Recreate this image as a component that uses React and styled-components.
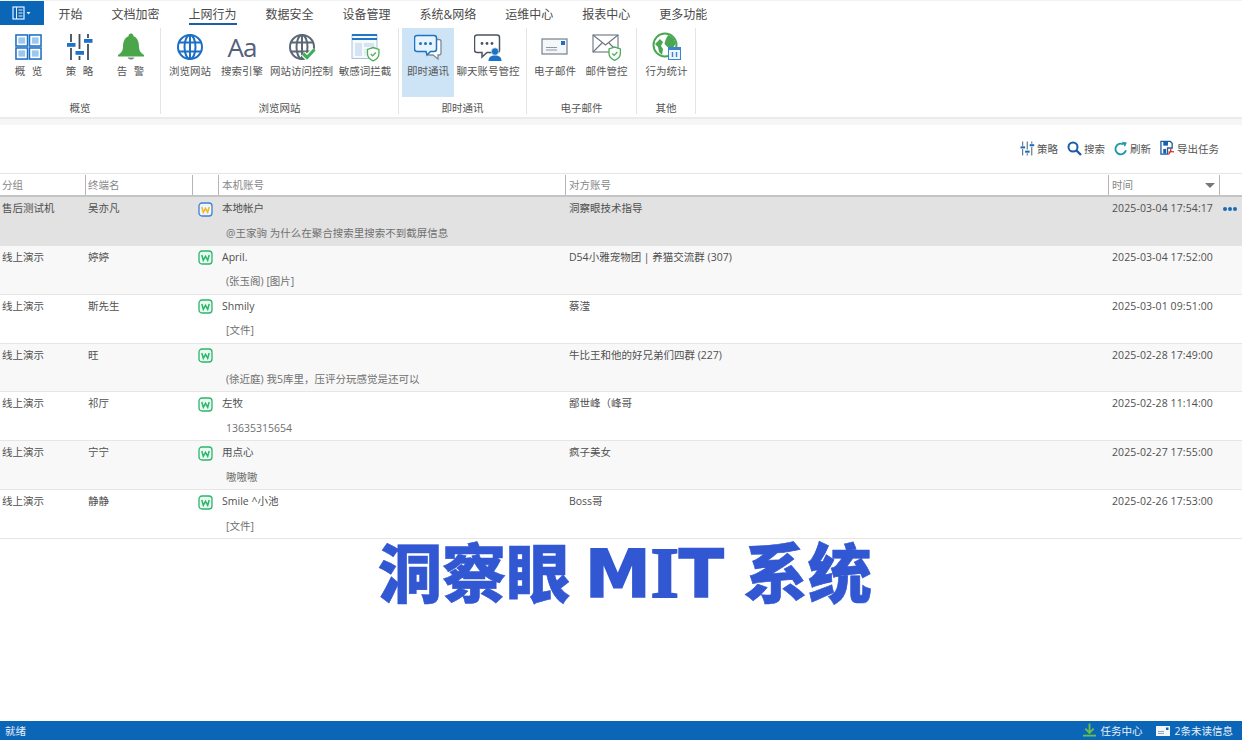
import React from "react";
import styled, { createGlobalStyle } from "styled-components";

const Global = createGlobalStyle`
  html, body { margin: 0; padding: 0; background: #fff; }
  body { font-family: "Open Sans", "Noto Sans CJK SC", sans-serif; color: #444; overflow: hidden; }
`;

const Page = styled.div`
  position: relative;
  width: 1242px;
  height: 740px;
  display: flex;
  flex-direction: column;
  background: #fff;
`;

/* ---------- tabs ---------- */
const TabBar = styled.div`
  height: 26px;
  display: flex;
  align-items: flex-start;
  box-sizing: border-box;
  border-top: 1px solid #f2f2f2;
`;
const MenuButton = styled.div`
  width: 44px;
  height: 24px;
  background: #0b66b8;
  display: flex;
  align-items: center;
  justify-content: center;
  flex: none;
`;
const Tabs = styled.div`
  display: flex;
  padding-left: 14.5px;
  gap: 29px;
`;
const Tab = styled.div`
  font-size: 12px;
  line-height: 27px;
  height: 24px;
  color: #4a4a4a;
  white-space: nowrap;
  box-sizing: border-box;
  border-bottom: ${(p) => (p.$active ? "2px solid #1b5fa8" : "2px solid transparent")};
`;

/* ---------- ribbon ---------- */
const Ribbon = styled.div`
  height: 91px;
  display: flex;
  padding-top: 2px;
  box-sizing: border-box;
`;
const Group = styled.div`
  width: ${(p) => p.$w}px;
  flex: none;
  display: flex;
  flex-direction: column;
  box-sizing: border-box;
  border-right: 1px solid #e4e4e4;
  height: 86px;
`;
const GroupButtons = styled.div`
  display: flex;
  padding-left: ${(p) => p.$pl || 0}px;
  height: 69px;
`;
const GroupLabel = styled.div`
  font-size: 10.5px;
  line-height: 14px;
  margin-top: 4px;
  text-align: center;
  color: #555;
`;
const RibbonButton = styled.div`
  width: ${(p) => p.$w}px;
  flex: none;
  height: 69px;
  display: flex;
  flex-direction: column;
  align-items: center;
  padding-top: 4px;
  box-sizing: border-box;
  background: ${(p) => (p.$active ? "#cde4f7" : "transparent")};
`;
const IconSlot = styled.div`
  height: 30px;
  display: flex;
  align-items: center;
  justify-content: center;
`;
const ButtonLabel = styled.div`
  margin-top: 1px;
  font-size: 10.5px;
  line-height: 16px;
  color: #555;
  white-space: nowrap;
  word-spacing: ${(p) => (p.$spaced ? "4px" : "0")};
`;
const AaGlyph = styled.span`
  font-family: "Open Sans", sans-serif;
  font-size: 26px;
  line-height: 30px;
  color: #55607a;
  letter-spacing: -1px;
`;
const Band = styled.div`
  height: 8px;
  background: #f6f6f6;
  border-top: 2px solid #ebebeb;
  box-sizing: border-box;
`;

/* ---------- toolbar ---------- */
const Toolbar = styled.div`
  height: 48px;
  display: flex;
  justify-content: flex-end;
  align-items: center;
  padding: 0 23px 2px 0;
  gap: 9px;
  box-sizing: border-box;
`;
const ToolItem = styled.div`
  display: flex;
  align-items: center;
  gap: 2px;
  font-size: 10.5px;
  color: #555;
`;

/* ---------- table ---------- */
const Table = styled.div`
  flex: 1;
  display: flex;
  flex-direction: column;
`;
const cols = "86px 107px 26px 347px 543px 111px 22px";
const HeaderRow = styled.div`
  display: grid;
  grid-template-columns: ${cols};
  height: 24px;
  border-top: 1px solid #e6e6e6;
  border-bottom: 2px solid #c4c4c4;
  box-sizing: border-box;
`;
const HeaderCell = styled.div`
  font-size: 10.5px;
  color: #888;
  padding-left: ${(p) => p.$pl ?? 3}px;
  padding-right: 4px;
  border-right: ${(p) => (p.$noline ? "none" : "1px solid #b5b5b5")};
  margin: 1px 0;
  line-height: 20px;
  display: flex;
  justify-content: space-between;
  align-items: center;
`;
const SortCaret = styled.span`
  width: 0;
  height: 0;
  border-left: 5px solid transparent;
  border-right: 5px solid transparent;
  border-top: 5px solid #777;
`;
const Row = styled.div`
  display: grid;
  grid-template-columns: ${cols};
  grid-template-rows: 24px 1fr;
  height: 48.86px;
  box-sizing: border-box;
  background: ${(p) => (p.$selected ? "#e2e2e2" : p.$alt ? "#f8f8f8" : "#fff")};
  border-bottom: 1px solid ${(p) => (p.$selected ? "#e2e2e2" : "#e6e6e6")};
`;
const Cell = styled.div`
  font-size: 10.5px;
  line-height: 23px;
  color: #505050;
  padding-left: ${(p) => p.$pl ?? 3}px;
  letter-spacing: ${(p) => p.$ls || 0}px;
  white-space: nowrap;
  overflow: hidden;
`;
const IconCell = styled.div`
  display: flex;
  justify-content: center;
  align-items: center;
  padding-right: 1px;
  height: 22px;
  padding-top: 1px;
`;
const Message = styled.div`
  grid-column: 4 / span 2;
  font-size: 10.5px;
  line-height: 23px;
  padding: 0.5px 0 0 7px;
  color: #707070;
  white-space: nowrap;
  grid-row: 2;
`;
const Dots = styled.div`
  display: flex;
  gap: 1px;
  align-items: center;
  padding-left: 3px;
  height: 23px;
`;
const Dot = styled.span`
  width: 4px;
  height: 4px;
  border-radius: 50%;
  background: #1b6ab8;
`;

/* ---------- overlay + status ---------- */
const Watermark = styled.div`
  position: absolute;
  left: 378px;
  top: 526px;
  display: flex;
  align-items: baseline;
  font-family: "Noto Sans CJK SC", sans-serif;
  font-weight: 900;
  font-size: 64px;
  line-height: 86px;
  color: #3257d2;
  white-space: pre;
  -webkit-text-stroke: 0.6px #3257d2;
`;
const WatermarkLatin = styled.span`
  display: flex;
  align-items: baseline;
  margin: 0 20px 0 15px;
  font-family: "DejaVu Sans", sans-serif;
  font-weight: 700;
  font-size: 66px;
  -webkit-text-stroke: 1.5px #3257d2;
`;
const WatermarkI = styled.span`
  font-family: "Liberation Serif", serif;
  font-size: 72px;
  -webkit-text-stroke: 2px #3257d2;
`;
const StatusBar = styled.div`
  height: 19px;
  background: #0b66b8;
  display: flex;
  align-items: center;
  justify-content: space-between;
  padding: 0 9px 0 5px;
  color: #e8f1fa;
  font-size: 10.5px;
  flex: none;
`;
const StatusRight = styled.div`
  display: flex;
  align-items: center;
  gap: 14px;
`;
const StatusItem = styled.div`
  display: flex;
  align-items: center;
  gap: 4px;
`;

/* ---------- drawings ---------- */
const GridIcon = () => (
  <svg width="27" height="26" viewBox="0 0 28 27" preserveAspectRatio="none">
    {[[1, 1], [15, 1], [1, 14.500], [15, 14.500]].map(([x, y]) => (
      <g key={x + "-" + y}>
        <rect x={x} y={y} width="12" height="11.500" fill="#fff" stroke="#1b6fc2" strokeWidth="1.600" />
        <rect x={x + 2.500} y={y + 2.500} width="7" height="6.500" fill="#9cc7ef" />
      </g>
    ))}
  </svg>
);
const Sliders = ({ s = 28, line = "#414c5c", h = "#1b74c8" }) => (
  <svg width={s} height={s} viewBox="0 0 28 28">
    <path d="M5 1v8M5 15v12M13.500 1v15M13.500 23v4M22 1v4M22 11v16" stroke={line} strokeWidth="1.800" fill="none" />
    <rect x="1" y="10" width="8.500" height="3.800" fill={h} />
    <rect x="9.500" y="18" width="8.500" height="3.800" fill={h} />
    <rect x="18" y="6" width="8.500" height="3.800" fill={h} />
  </svg>
);
const Bell = () => (
  <svg width="28" height="28" viewBox="0 0 28 28">
    <path d="M14 .5c1.500 0 2.500 1 2.500 2.800C21 5 22 10 22 14c0 4 2 6 5 8v1.500H1V22c3-2 5-4 5-8 0-4 1-9 5.500-10.700C11.500 1.500 12.500.5 14 .5z" fill="#4ba64a" />
    <path d="M10.500 24.500h7c-.8 1.500-2 2-3.500 2s-2.700-.5-3.500-2z" fill="#7d8a86" />
  </svg>
);
const Globe = ({ color = "#1c6fc4", check }) => (
  <svg width="28" height="28" viewBox="0 0 28 28">
    <g fill="none" stroke={color} strokeWidth="2">
      <circle cx="14" cy="14" r="12" />
      <ellipse cx="14" cy="14" rx="5.500" ry="12" />
      <path d="M14 2v24M3 9.500h22M3 18.500h22" />
    </g>
    {check && (
      <g fill="none">
        <path d="M15 20.500l4 4 7.500-8" stroke="#fff" strokeWidth="5.500" />
        <path d="M15 20.500l4 4 7.500-8" stroke="#3fae57" strokeWidth="3.200" />
      </g>
    )}
  </svg>
);
const Shield = ({ x, y, s = 1, c = "#4fae5b" }) => (
  <g transform={`translate(${x} ${y}) scale(${s})`}>
    <path d="M6 0l6 2v4.500c0 3.500-2.500 6-6 7.500-3.500-1.500-6-4-6-7.500V2z" fill="#fff" stroke={c} strokeWidth="1.400" />
    <path d="M3.400 6.800l2 2 3.400-3.600" fill="none" stroke={c} strokeWidth="1.400" />
  </g>
);
const BrowserShield = () => (
  <svg width="29" height="29" viewBox="0 0 29 29">
    <rect x="1" y="1.500" width="25" height="24" fill="#f7f9fb" stroke="#a9c4de" strokeWidth="1" />
    <rect x="1" y="1" width="25" height="2" fill="#1f77c9" />
    <rect x="1" y="5" width="25" height="2" fill="#1f77c9" />
    <rect x="4" y="10" width="7" height="13" fill="#d5e4f3" />
    <rect x="13" y="10" width="10" height="4" fill="#d5e4f3" />
    <rect x="13" y="16" width="4" height="7" fill="#e6eef6" />
    <Shield x="16.500" y="14.500" s="0.950" />
  </svg>
);
const ChatDouble = () => (
  <svg width="28" height="28" viewBox="0 0 28 28">
    <path d="M22 6.500h3c1 0 2 1 2 2V20c0 1-1 2-2 2h-1v4l-5-4h-5" fill="#fff" stroke="#7e8b99" strokeWidth="1.300" />
    <path d="M3 2.500h17c1.500 0 2.500 1 2.500 2.500v11c0 1.500-1 2.500-2.500 2.500h-3.500L13 22l-1-3.500H3c-1.500 0-2.500-1-2.500-2.500V5c0-1.500 1-2.500 2.500-2.500z" fill="#e9f3fb" stroke="#1c72c4" strokeWidth="1.500" />
    <circle cx="6.500" cy="10.500" r="1.500" fill="#1c72c4" />
    <circle cx="11.500" cy="10.500" r="1.500" fill="#1c72c4" />
    <circle cx="16.500" cy="10.500" r="1.500" fill="#1c72c4" />
  </svg>
);
const ChatUser = () => (
  <svg width="28" height="28" viewBox="0 0 28 28">
    <path d="M3 2h20c1.500 0 2.500 1 2.500 2.500V17c0 1.500-1 2.500-2.500 2.500H13l-5 4.500v-4.500H3c-1.500 0-2.500-1-2.500-2.500V4.500C.5 3 1.500 2 3 2z" fill="#fff" stroke="#4a5563" strokeWidth="1.500" />
    <circle cx="8" cy="10.500" r="1.400" fill="#4a5563" />
    <circle cx="13" cy="10.500" r="1.400" fill="#4a5563" />
    <circle cx="18" cy="10.500" r="1.400" fill="#4a5563" />
    <circle cx="21" cy="18.500" r="3.700" fill="#1c72c4" stroke="#fff" strokeWidth=".6" />
    <path d="M14.500 28c0-4 2.500-5.500 6.500-5.500s6.500 1.500 6.500 5.500z" fill="#1c72c4" />
  </svg>
);
const CardMail = () => (
  <svg width="28" height="24" viewBox="0 0 28 24">
    <rect x="1" y="4" width="25" height="15" fill="#f4f6f8" stroke="#75818e" strokeWidth="1.200" />
    <rect x="20" y="6" width="4" height="4" fill="#1c6fc4" />
    <path d="M5 12.500h11M5 15h11" stroke="#8e99a5" strokeWidth="1" />
  </svg>
);
const MailShield = () => (
  <svg width="30" height="30" viewBox="0 0 30 30">
    <rect x="1" y="3" width="25" height="17" fill="#fff" stroke="#6a7480" strokeWidth="1.100" />
    <path d="M1 3l12.500 10L26 3M1 20l9-9M26 20l-9-9" fill="none" stroke="#6a7480" strokeWidth="1.100" />
    <Shield x="17" y="15" s="0.950" />
  </svg>
);
const EarthTable = () => (
  <svg width="30" height="30" viewBox="0 0 30 30">
    <circle cx="13" cy="13" r="11.500" fill="#fff" stroke="#4aa651" strokeWidth="2" />
    <path d="M3 12l5-5 3 3-2 4 2 3-1 6-3-3-1-5z" fill="#4aa651" />
    <path d="M16 3c4 1 7 4 7.500 9l-2 3h-6l-3-3 1-4z" fill="#4aa651" />
    <rect x="16.500" y="15.500" width="12" height="12" fill="#eef4fb" stroke="#3b84cf" strokeWidth="1" />
    <rect x="16.500" y="15.500" width="12" height="2.500" fill="#3b84cf" />
    <path d="M20.500 20v5M24.500 20v5" stroke="#3b84cf" strokeWidth="1.400" />
  </svg>
);
const Search = () => (
  <svg width="15" height="15" viewBox="0 0 15 15">
    <circle cx="6" cy="6" r="4.500" fill="none" stroke="#1a5ea8" strokeWidth="2" />
    <path d="M9.500 9.500L14 14" stroke="#1a5ea8" strokeWidth="2.400" />
  </svg>
);
const Refresh = () => (
  <svg width="14" height="15" viewBox="0 0 15 15">
    <path d="M12.800 9.500A5.700 5.700 0 1 1 10 3" fill="none" stroke="#1d9aa8" strokeWidth="2" />
    <path d="M8.500 .3l5.200.7-2 4.800z" fill="#1d9aa8" />
  </svg>
);
const SavePdf = () => (
  <svg width="15" height="16" viewBox="0 0 16 16">
    <path d="M1 1h10l2 2v5H8v6.500H1z" fill="#fff" stroke="#1a5ea8" strokeWidth="1.400" />
    <rect x="3.500" y="1.500" width="5" height="4" fill="#1a5ea8" />
    <path d="M3.500 9h3v5h-3z" fill="#1a5ea8" />
    <path d="M9 15c2-2 3-4 2.500-6.500M9 12.500c2-.8 4-1 6-.3" fill="none" stroke="#d33a2c" strokeWidth="1.300" />
  </svg>
);
const WBadge = ({ kind }) => {
  const y = kind === "y";
  const stroke = y ? "#3f7fd6" : "#2cb56c";
  const letter = y ? "#f2b824" : "#2cb56c";
  const fill = y ? "#f1f6fd" : "#eafaf1";
  return (
    <svg width="15" height="15" viewBox="0 0 15 15">
      <rect x="1" y="1" width="13" height="13" rx="3" fill={fill} stroke={stroke} strokeWidth="1.300" />
      <path d="M3.800 5l1.500 5.300 2.200-4 2.200 4L11.200 5" fill="none" stroke={letter} strokeWidth="1.500" />
    </svg>
  );
};
const MenuGlyph = () => (
  <svg width="20" height="14" viewBox="0 0 20 14">
    <rect x="1" y="1" width="11" height="12" fill="none" stroke="#e6f0fa" strokeWidth="1.200" />
    <path d="M4.500 1v12M6.500 4h4M6.500 7h4M6.500 10h4" stroke="#e6f0fa" strokeWidth="1" />
    <path d="M14.500 6h4l-2 2.500z" fill="#e6f0fa" />
  </svg>
);
const StatusArrow = () => (
  <svg width="13" height="15" viewBox="0 0 14 15">
    <path d="M7 0v10M2.500 5.500L7 10l4.500-4.500" fill="none" stroke="#68c04a" strokeWidth="2" />
    <path d="M0 13h14" stroke="#68c04a" strokeWidth="2" />
  </svg>
);
const StatusMail = () => (
  <svg width="14" height="12" viewBox="0 0 14 12">
    <rect x="0" y="1" width="14" height="10" fill="#f2f6fa" />
    <rect x="10" y="2.500" width="2.500" height="2.500" fill="#0b66b8" />
    <path d="M2 6.500h6M2 8.500h6" stroke="#8fa4b8" strokeWidth="1" />
  </svg>
);

/* ---------- data ---------- */
const tabs = ["开始", "文档加密", "上网行为", "数据安全", "设备管理", "系统&网络", "运维中心", "报表中心", "更多功能"];
const groups = [
  { w: 161, pl: 3, label: "概览", items: [
    { w: 51, t: "概 览", sp: 1, i: <GridIcon /> },
    { w: 51, t: "策 略", sp: 1, i: <Sliders /> },
    { w: 51, t: "告 警", sp: 1, i: <Bell /> },
  ]},
  { w: 238, pl: 3, label: "浏览网站", items: [
    { w: 52, t: "浏览网站", i: <Globe /> },
    { w: 52, t: "搜索引擎", i: <AaGlyph>Aa</AaGlyph> },
    { w: 67, t: "网站访问控制", i: <Globe color="#5c6776" check /> },
    { w: 60, t: "敏感词拦截", i: <BrowserShield /> },
  ]},
  { w: 128, pl: 3, label: "即时通讯", items: [
    { w: 52, t: "即时通讯", active: 1, i: <ChatDouble /> },
    { w: 68, t: "聊天账号管控", i: <ChatUser /> },
  ]},
  { w: 110, pl: 2, label: "电子邮件", items: [
    { w: 52, t: "电子邮件", i: <CardMail /> },
    { w: 51, t: "邮件管控", i: <MailShield /> },
  ]},
  { w: 59, pl: 3, label: "其他", items: [
    { w: 53, t: "行为统计", i: <EarthTable /> },
  ]},
];
const rows = [
  { g: "售后测试机", n: "吴亦凡", k: "y", a: "本地帐户", b: "洞察眼技术指导", t: "2025-03-04 17:54:17", m: "@王家驹 为什么在聚合搜索里搜索不到截屏信息" },
  { g: "线上演示", n: "婷婷", a: "April.", b: "D54小雅宠物团 | 养猫交流群 (307)", t: "2025-03-04 17:52:00", m: "(张玉阁) [图片]" },
  { g: "线上演示", n: "斯先生", a: "Shmily", b: "蔡滢", t: "2025-03-01 09:51:00", m: "[文件]" },
  { g: "线上演示", n: "旺", a: "", b: "牛比王和他的好兄弟们四群 (227)", t: "2025-02-28 17:49:00", m: "(徐近庭) 我5库里，压评分玩感觉是还可以" },
  { g: "线上演示", n: "祁厅", a: "左牧", b: "鄙世峰（峰哥", t: "2025-02-28 11:14:00", m: "13635315654" },
  { g: "线上演示", n: "宁宁", a: "用点心", b: "疯子美女", t: "2025-02-27 17:55:00", m: "嗷嗷嗷" },
  { g: "线上演示", n: "静静", a: "Smile ^小池", b: "Boss哥", t: "2025-02-26 17:53:00", m: "[文件]" },
];

export default function App() {
  return (
    <Page>
      <Global />
      <TabBar>
        <MenuButton><MenuGlyph /></MenuButton>
        <Tabs>
          {tabs.map((t) => <Tab key={t} $active={t === "上网行为"}>{t}</Tab>)}
        </Tabs>
      </TabBar>
      <Ribbon>
        {groups.map((g) => (
          <Group key={g.label} $w={g.w}>
            <GroupButtons $pl={g.pl}>
              {g.items.map((it) => (
                <RibbonButton key={it.t} $w={it.w} $active={it.active}>
                  <IconSlot>{it.i}</IconSlot>
                  <ButtonLabel $spaced={it.sp}>{it.t}</ButtonLabel>
                </RibbonButton>
              ))}
            </GroupButtons>
            <GroupLabel>{g.label}</GroupLabel>
          </Group>
        ))}
      </Ribbon>
      <Band />
      <Toolbar>
        <ToolItem><Sliders s={15} line="#3a5a78" h="#1a6ab8" />策略</ToolItem>
        <ToolItem><Search />搜索</ToolItem>
        <ToolItem><Refresh />刷新</ToolItem>
        <ToolItem><SavePdf />导出任务</ToolItem>
      </Toolbar>
      <Table>
        <HeaderRow>
          <HeaderCell $pl={2}>分组</HeaderCell>
          <HeaderCell $pl={2}>终端名</HeaderCell>
          <HeaderCell />
          <HeaderCell>本机账号</HeaderCell>
          <HeaderCell>对方账号</HeaderCell>
          <HeaderCell>时间<SortCaret /></HeaderCell>
          <HeaderCell $noline />
        </HeaderRow>
        {rows.map((r, i) => (
          <Row key={r.t} $selected={i === 0} $alt={i % 2 === 1}>
            <Cell $pl={2}>{r.g}</Cell>
            <Cell $pl={2}>{r.n}</Cell>
            <IconCell><WBadge kind={r.k} /></IconCell>
            <Cell>{r.a}</Cell>
            <Cell>{r.b}</Cell>
            <Cell $ls={0.1}>{r.t}</Cell>
            {i === 0 ? <Dots><Dot /><Dot /><Dot /></Dots> : <span />}
            <Message>{r.m}</Message>
          </Row>
        ))}
      </Table>
      <Watermark>
        洞察眼
        <WatermarkLatin>M<WatermarkI>I</WatermarkI>T</WatermarkLatin>
        系统
      </Watermark>
      <StatusBar>
        <span>就绪</span>
        <StatusRight>
          <StatusItem><StatusArrow />任务中心</StatusItem>
          <StatusItem><StatusMail />2条未读信息</StatusItem>
        </StatusRight>
      </StatusBar>
    </Page>
  );
}
